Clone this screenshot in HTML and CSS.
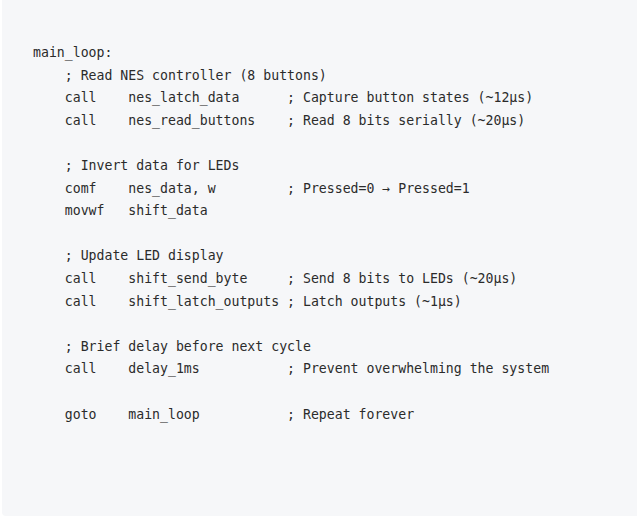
FILE: index.html
```html
<!DOCTYPE html>
<html>
<head>
<meta charset="utf-8">
<link rel="stylesheet" href="styles.css">
</head>
<body>
<div class="code-block"><pre class="code">main_loop:
    ; Read NES controller (8 buttons)
    call    nes_latch_data      ; Capture button states (~12µs)
    call    nes_read_buttons    ; Read 8 bits serially (~20µs)

    ; Invert data for LEDs
    comf    nes_data, w         ; Pressed=0 → Pressed=1
    movwf   shift_data

    ; Update LED display
    call    shift_send_byte     ; Send 8 bits to LEDs (~20µs)
    call    shift_latch_outputs ; Latch outputs (~1µs)

    ; Brief delay before next cycle
    call    delay_1ms           ; Prevent overwhelming the system

    goto    main_loop           ; Repeat forever</pre></div>
</body>
</html>
```
FILE: styles.css
```css
html, body {
  margin: 0;
  padding: 0;
  background: #ffffff;
}

.code-block {
  margin: 0 0 0 2px;
  height: 516px;
  background: #f6f7f9;
  border-bottom-left-radius: 4px;
  box-sizing: border-box;
  padding: 42px 0 0 31px;
}

.code {
  margin: 0;
  font-family: "DejaVu Sans Mono", "Liberation Mono", monospace;
  font-size: 13.2px;
  line-height: 22.6px;
  color: #2b2b2b;
  white-space: pre;
}
```
